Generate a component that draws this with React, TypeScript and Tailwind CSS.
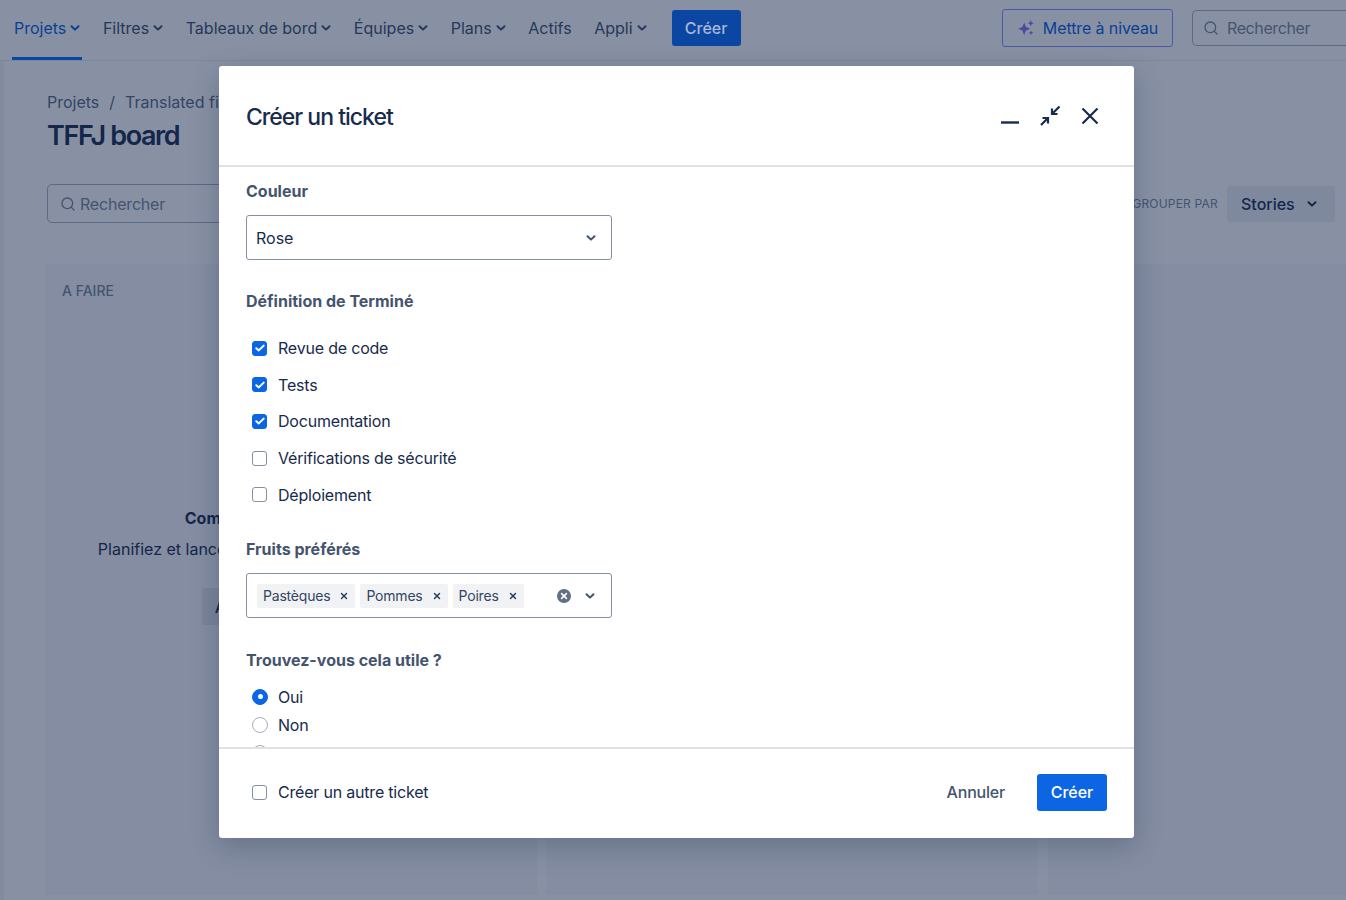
import { Search, X } from 'lucide-react';

const font = 'font-["Inter",sans-serif]';

function Chevron({ className = '' }: { className?: string }) {
  return (
    <svg className={className} width="10" height="8" viewBox="0 0 10 8" fill="none" stroke="currentColor" strokeWidth="2" strokeLinecap="round" strokeLinejoin="round">
      <path d="M1.5 2.2 5 5.6l3.5-3.4" />
    </svg>
  );
}

function NavItem({ label, chevron = true, active = false }: { label: string; chevron?: boolean; active?: boolean }) {
  return (
    <div className={`relative flex h-[56px] items-center gap-[4px] text-[16px] ${active ? 'text-[#0b3f94]' : 'text-[#253858]'}`}>
      <span>{label}</span>
      {chevron && <Chevron />}
      {active && <div className="absolute bottom-[-4px] left-[-2px] right-[-2px] h-[3px] bg-[#0b46a3]" />}
    </div>
  );
}

function Sparkle() {
  return (
    <svg width="16" height="16" viewBox="0 0 16 16" fill="#4b4a9c">
      <path d="M6.2 2.4 8 7l4.4 1.7L8 10.4 6.2 15l-1.8-4.6L0 8.7 4.4 7z" />
      <path d="M12.8 0l.9 2.3 2.3.9-2.3.9-.9 2.3-.9-2.3-2.3-.9 2.3-.9zM13 10.4l.7 1.7 1.7.7-1.7.7-.7 1.7-.7-1.7-1.7-.7 1.7-.7z" />
    </svg>
  );
}

function Nav() {
  return (
    <header className="flex h-[61px] shrink-0 items-center border-b border-[#7c869b] pb-[4px] pl-[14px]">
      <div className="flex items-center gap-[22.6px]">
        <NavItem label="Projets" active />
        <NavItem label="Filtres" />
        <NavItem label="Tableaux de bord" />
        <NavItem label="Équipes" />
        <NavItem label="Plans" />
        <NavItem label="Actifs" chevron={false} />
        <NavItem label="Appli" />
      </div>
      <button className="ml-[25px] h-[36px] w-[69px] rounded-[3px] bg-[#0b46a3] text-[16px] font-medium text-[#a9b8d6]">Créer</button>
      <button className="ml-auto flex h-[38px] w-[171px] items-center justify-center gap-[9px] rounded-[3px] border border-[#4a5aa6] pl-[1px] text-[16px] tracking-[-0.1px] text-[#0b3f94]">
        <Sparkle />
        <span>Mettre à niveau</span>
      </button>
      <div className="ml-[19px] mr-[-10px] flex h-[36px] w-[164px] items-center gap-[8px] rounded-l-[5px] border border-r-0 border-[#5b6a85] pl-[10px] text-[16px] tracking-[-0.4px] text-[#44546f]">
        <Search size={16} strokeWidth={2} />
        <span>Rechercher</span>
      </div>
    </header>
  );
}

function Background() {
  return (
    <div className="flex h-full flex-col bg-[#8891a4]">
      <Nav />
      <div className="flex min-h-0 flex-1">
        <div className="w-[4px] shrink-0 bg-[#828ca0]" />
        <main className="min-w-0 flex-1 pl-[41px]">
          <div className="pl-[2px]">
            <div className="mt-[30px] flex items-center gap-[10px] text-[16px] leading-[22px] text-[#344563]">
              <span>Projets</span>
              <span>/</span>
              <span>Translated fields</span>
            </div>
            <h1 className="mt-[5px] text-[27px] font-semibold leading-[36px] tracking-[-1.4px] text-[#14264a]">TFFJ board</h1>
            <div className="mt-[30px] flex h-[39px] items-center justify-between pr-[11px]">
              <div className="flex h-[39px] w-[260px] items-center gap-[4px] rounded-[5px] border border-[#5b6a85] pl-[12px] text-[16px] tracking-[-0.2px] text-[#44546f]">
                <Search size={16} strokeWidth={2} />
                <span>Rechercher</span>
              </div>
              <div className="flex items-center gap-[9px]">
                <span className="text-[12px] tracking-[0.2px] text-[#44546f]">GROUPER PAR</span>
                <div className="flex h-[36px] w-[108px] items-center gap-[12px] rounded-[3px] bg-[#7f899e] pl-[14px] text-[16px] font-medium text-[#14264a]">
                  <span>Stories</span>
                  <Chevron />
                </div>
              </div>
            </div>
          </div>
          <div className="mt-[41px] flex h-[631px] gap-[9px]">
            <section className="relative flex w-[492px] shrink-0 flex-col items-center rounded-t-[4px] bg-[#848da1]">
              <div className="w-full pl-[17px] pt-[18px] text-[14px] font-medium leading-[18px] text-[#44546f]">A FAIRE</div>
              <div className="mt-[207px] whitespace-nowrap text-[16px] font-bold leading-[22px] text-[#14264a]">Commencez avec un sprint</div>
              <div className="mt-[9px] whitespace-nowrap text-[16px] leading-[22px] text-[#14264a]">Planifiez et lancez un sprint pour voir les tickets ici.</div>
              <button className="mt-[28px] h-[37px] w-[178px] rounded-[3px] bg-[#7a849a] text-[16px] font-medium text-[#14264a]">Accéder au backlog</button>
            </section>
            <section className="w-[492px] shrink-0 rounded-t-[4px] bg-[#848da1]" />
            <section className="ml-[1px] flex-1 rounded-tl-[4px] bg-[#848da1]" />
          </div>
        </main>
      </div>
    </div>
  );
}

function Check({ on = false, label }: { on?: boolean; label: string }) {
  return (
    <label className="flex h-[22px] items-center gap-[11px] pl-[6px] text-[16px] tracking-[-0.2px] text-[#172b4d]">
      <span className={`flex h-[15px] w-[15px] items-center justify-center rounded-[3px] border-[1.5px] ${on ? 'border-[#0c66e4] bg-[#0c66e4]' : 'border-[#8590a2] bg-white'}`}>
        {on && (
          <svg width="10" height="8" viewBox="0 0 10 8" fill="none" stroke="white" strokeWidth="2" strokeLinecap="round" strokeLinejoin="round">
            <path d="M1.3 4.2 3.8 6.4 8.7 1.6" />
          </svg>
        )}
      </span>
      <span>{label}</span>
    </label>
  );
}

function Radio({ on = false, label }: { on?: boolean; label?: string }) {
  return (
    <label className="flex h-[22px] items-center gap-[10px] pl-[6px] text-[16px] tracking-[-0.2px] text-[#172b4d]">
      <span className={`flex h-[16px] w-[16px] items-center justify-center rounded-full border ${on ? 'border-[#0c66e4] bg-[#0c66e4]' : 'border-[#a5adba] bg-white'}`}>
        {on && <span className="h-[5px] w-[5px] rounded-full bg-white" />}
      </span>
      {label && <span>{label}</span>}
    </label>
  );
}

function Tag({ label }: { label: string }) {
  return (
    <span className="flex h-[24px] items-center gap-[9px] rounded-[2px] bg-[#f1f2f4] px-[6px] text-[14px] tracking-[-0.2px] text-[#344563]">
      {label}
      <X size={10} strokeWidth={3.5} className="text-[#2c3e5d]" />
    </span>
  );
}

function FieldLabel({ children }: { children: string }) {
  return <div className="text-[16px] font-bold leading-[20px] text-[#44546f]">{children}</div>;
}

function Modal() {
  return (
    <div className="absolute left-[219px] top-[66px] flex h-[772px] w-[915px] flex-col rounded-[3px] bg-white shadow-[0_8px_28px_rgba(9,30,66,0.25)]">
      <div className="flex h-[101px] shrink-0 items-center justify-between border-b-2 border-[#dfe1e6] pl-[27px] pr-[35px]">
        <h2 className="pt-[4px] text-[23px] font-medium tracking-[-1px] text-[#172b4d]">Créer un ticket</h2>
        <div className="flex items-center gap-[20px] text-[#172b4d]">
          <svg width="18" height="22" viewBox="0 0 18 22" fill="none" stroke="currentColor" strokeWidth="2.4">
            <path d="M0 17.5h18" />
          </svg>
          <svg width="22" height="22" viewBox="0 0 22 22" fill="none" stroke="currentColor" strokeWidth="2.2">
            <path d="M13 9 20.5 1.5M13 3.5V9h5.5M9 13l-7 7M3.5 13H9v5.5" />
          </svg>
          <svg width="18" height="18" viewBox="0 0 18 18" fill="none" stroke="currentColor" strokeWidth="2.2">
            <path d="M1.5 1.5l15 15M16.5 1.5l-15 15" />
          </svg>
        </div>
      </div>
      <div className="min-h-0 flex-1 overflow-hidden pl-[27px]">
        <div className="mt-[14px]"><FieldLabel>Couleur</FieldLabel></div>
        <div className="mt-[14px] flex h-[45px] w-[366px] items-center justify-between rounded-[3px] border border-[#8590a2] pl-[9px] pr-[15px] text-[16px] text-[#172b4d]">
          <span>Rose</span>
          <Chevron className="text-[#44546f]" />
        </div>
        <div className="mt-[31px]"><FieldLabel>Définition de Terminé</FieldLabel></div>
        <div className="mt-[26px] flex flex-col gap-[14.7px]">
          <Check on label="Revue de code" />
          <Check on label="Tests" />
          <Check on label="Documentation" />
          <Check label="Vérifications de sécurité" />
          <Check label="Déploiement" />
        </div>
        <div className="mt-[33px]"><FieldLabel>Fruits préférés</FieldLabel></div>
        <div className="mt-[14px] flex h-[45.5px] w-[366px] items-center gap-[5px] rounded-[3px] border border-[#8590a2] pl-[10px] pr-[16px]">
          <Tag label="Pastèques" />
          <Tag label="Pommes" />
          <Tag label="Poires" />
          <svg className="ml-auto" width="14" height="14" viewBox="0 0 14 14">
            <circle cx="7" cy="7" r="7" fill="#626f86" />
            <path d="M4.6 4.6l4.8 4.8M9.4 4.6l-4.800 4.800" stroke="white" strokeWidth="1.6" strokeLinecap="round" />
          </svg>
          <Chevron className="ml-[9px] text-[#44546f]" />
        </div>
        <div className="mt-[31.5px]"><FieldLabel>Trouvez-vous cela utile ?</FieldLabel></div>
        <div className="mt-[16px] flex flex-col gap-[6px]">
          <Radio on label="Oui" />
          <Radio label="Non" />
          <Radio />
        </div>
      </div>
      <div className="flex h-[91px] shrink-0 items-center justify-between border-t-2 border-[#dfe1e6] pb-[3px] pl-[27px] pr-[27px]">
        <Check label="Créer un autre ticket" />
        <div className="flex items-center gap-[32px]">
          <span className="text-[16px] font-medium tracking-[-0.2px] text-[#44546f]">Annuler</span>
          <button className="h-[37px] w-[70px] rounded-[3px] bg-[#0c66e4] text-[16px] font-medium text-white">Créer</button>
        </div>
      </div>
    </div>
  );
}

export default function App() {
  return (
    <div className={`relative h-[900px] w-full overflow-hidden ${font}`}>
      <Background />
      <Modal />
    </div>
  );
}
